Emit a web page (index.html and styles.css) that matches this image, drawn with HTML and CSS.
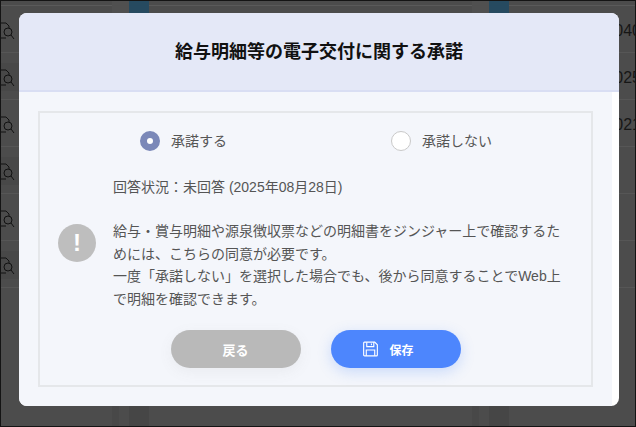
FILE: index.html
```html
<!DOCTYPE html>
<html lang="ja">
<head>
<meta charset="utf-8">
<title>給与明細等の電子交付に関する承諾</title>
<link rel="stylesheet" href="styles.css">
</head>
<body>
<div class="stage">
  <div class="table">
    <div class="table-top"></div>
    <div class="row"><svg class="doc" width="14" height="18" viewBox="0 0 14 18"><path d="M0 1H5L8 4V6M0 16H5"/><circle cx="7" cy="10" r="4"/><path d="M10 13L13 17"/></svg><span class="num">040</span></div>
    <div class="row row-alt"><svg class="doc" width="14" height="18" viewBox="0 0 14 18"><path d="M0 1H5L8 4V6M0 16H5"/><circle cx="7" cy="10" r="4"/><path d="M10 13L13 17"/></svg><span class="num">025</span></div>
    <div class="row"><svg class="doc" width="14" height="18" viewBox="0 0 14 18"><path d="M0 1H5L8 4V6M0 16H5"/><circle cx="7" cy="10" r="4"/><path d="M10 13L13 17"/></svg><span class="num">021</span></div>
    <div class="row row-alt"><svg class="doc" width="14" height="18" viewBox="0 0 14 18"><path d="M0 1H5L8 4V6M0 16H5"/><circle cx="7" cy="10" r="4"/><path d="M10 13L13 17"/></svg></div>
    <div class="row"><svg class="doc" width="14" height="18" viewBox="0 0 14 18"><path d="M0 1H5L8 4V6M0 16H5"/><circle cx="7" cy="10" r="4"/><path d="M10 13L13 17"/></svg></div>
    <div class="row row-alt"><svg class="doc" width="14" height="18" viewBox="0 0 14 18"><path d="M0 1H5L8 4V6M0 16H5"/><circle cx="7" cy="10" r="4"/><path d="M10 13L13 17"/></svg></div>
  </div>
  <div class="stripe stripe-a"></div>
  <div class="stripe stripe-b"></div>

  <section class="modal">
    <header class="modal-head"><h1>給与明細等の電子交付に関する承諾</h1></header>
    <div class="modal-body">
      <div class="box">
        <div class="radios">
          <div class="radio-item"><span class="radio radio-on"></span><span>承諾する</span></div>
          <div class="radio-item"><span class="radio"></span><span>承諾しない</span></div>
        </div>
        <div class="info">
          <div class="alert-col"><span class="alert">!</span></div>
          <div class="copy">
            <p class="status">回答状況：未回答 (2025年08月28日)</p>
            <p class="desc">給与・賞与明細や源泉徴収票などの明細書をジンジャー上で確認するためには、こちらの同意が必要です。<br>一度「承諾しない」を選択した場合でも、後から同意することでWeb上で明細を確認できます。</p>
          </div>
        </div>
        <div class="actions">
          <button class="btn btn-back" type="button">戻る</button>
          <button class="btn btn-save" type="button">
            <svg class="save-icon" width="15" height="16" viewBox="0 0 16 16"><path d="M1.5 .7H12.5L15.3 3.5V14.3a1 1 0 0 1-1 1H1.7a1 1 0 0 1-1-1V1.5a.8.8 0 0 1 .8-.8Z"/><path d="M4 .7V5.5H11.5V.7M9 2.2V4M3.5 15.3V9H12.5V15.3"/></svg>
            <span>保存</span>
          </button>
        </div>
      </div>
    </div>
  </section>
</div>
</body>
</html>
```
FILE: styles.css
```css
* { box-sizing: border-box; }
html, body { margin: 0; padding: 0; }
body {
  width: 636px;
  height: 427px;
  overflow: hidden;
  font-family: "Liberation Sans", "Noto Sans CJK JP", sans-serif;
}
.stage {
  position: relative;
  width: 636px;
  height: 427px;
  overflow: hidden;
  background: #4c4c4c;
  border: 1px solid #141414;
}
.table-top {
  height: 5px;
  border-bottom: 1px solid #5a5a5a;
}
.row {
  display: flex;
  align-items: center;
  justify-content: space-between;
  height: 47px;
  border-bottom: 1px solid #565656;
  position: relative;
  padding-top: 4px;
}
.row-alt::before {
  content: "";
  position: absolute;
  left: 0;
  top: 10px;
  width: 30px;
  height: 28px;
  border-radius: 0 10px 10px 0;
  background: #484848;
}
.doc { position: relative; fill: none; stroke: #111; stroke-width: 1; flex: none; }
.num {
  font-size: 16px;
  color: #161616;
  margin-right: -6px;
}
.stripe {
  position: absolute;
  top: 0;
  bottom: 0;
  width: 37px;
  background: linear-gradient(to right, #505050 0 17px, #264a60 17px) top / 100% 12px no-repeat,
    linear-gradient(to right, #484848 0 7px, #4c4c4c 7px 17px, #464646 17px);
}
.stripe-a { left: 111px; }
.stripe-b { left: 471px; }
.modal {
  position: absolute;
  left: 18px;
  top: 12px;
  width: 600px;
  height: 393px;
  display: flex;
  flex-direction: column;
  background: #fff;
  border-radius: 8px;
  overflow: hidden;
}
.modal-head {
  flex: none;
  height: 79px;
  display: flex;
  align-items: center;
  justify-content: center;
  background: #e4e8f7;
  border-bottom: 2px solid #d9def3;
}
.modal-head h1 {
  margin: 0;
  font-size: 18px;
  font-weight: 700;
  line-height: 1;
  color: #111;
}
.modal-body {
  flex: 1;
  width: 593px;
  padding: 19px;
  background: #f4f6fb;
}
.box {
  height: 276px;
  border: 2px solid #e5e7ea;
  display: flex;
  flex-direction: column;
}
.radios {
  display: grid;
  grid-template-columns: 251px auto;
  padding: 18px 0 0 100px;
}
.radio-item {
  display: flex;
  align-items: center;
  gap: 11px;
  font-size: 14px;
  line-height: 20px;
  color: #555;
}
.radio {
  width: 20px;
  height: 20px;
  border-radius: 50%;
  background: #fff;
  border: 1px solid #c9c9c9;
}
.radio-on {
  border: 7px solid #7b88b8;
  background: #fff;
}
.info {
  display: flex;
  padding: 0 30px 0 18px;
  margin-top: 25px;
  flex: 1;
}
.alert-col {
  width: 55px;
  flex: none;
  padding-top: 48px;
}
.alert {
  display: flex;
  align-items: center;
  justify-content: center;
  width: 38px;
  height: 38px;
  border-radius: 50%;
  background: #bebebe;
  color: #fff;
  font-size: 24px;
  font-weight: 700;
  line-height: 1;
}
.copy { width: 452px; flex: none; color: #555; font-size: 14px; }
.status { margin: 0; line-height: 22px; }
.desc { margin: 22px 0 0; line-height: 22.7px; }
.actions {
  display: flex;
  justify-content: center;
  gap: 30px;
  padding: 0 0 17px 0;
}
.btn {
  display: flex;
  align-items: center;
  justify-content: center;
  width: 130px;
  height: 38px;
  padding: 0;
  border: 0;
  border-radius: 19px;
  color: #fff;
  font-family: inherit;
  font-size: 13px;
  font-weight: 700;
}
.btn-back {
  background: #b9b9b9;
  box-shadow: 0 4px 14px rgba(120, 120, 120, .08);
}
.btn-save {
  gap: 11px;
  padding-right: 14px;
  font-size: 12px;
  background: #4d86fd;
  box-shadow: 0 4px 14px rgba(77, 134, 253, .25);
}
.save-icon { fill: none; stroke: #fff; stroke-width: 1.2; flex: none; }
```
